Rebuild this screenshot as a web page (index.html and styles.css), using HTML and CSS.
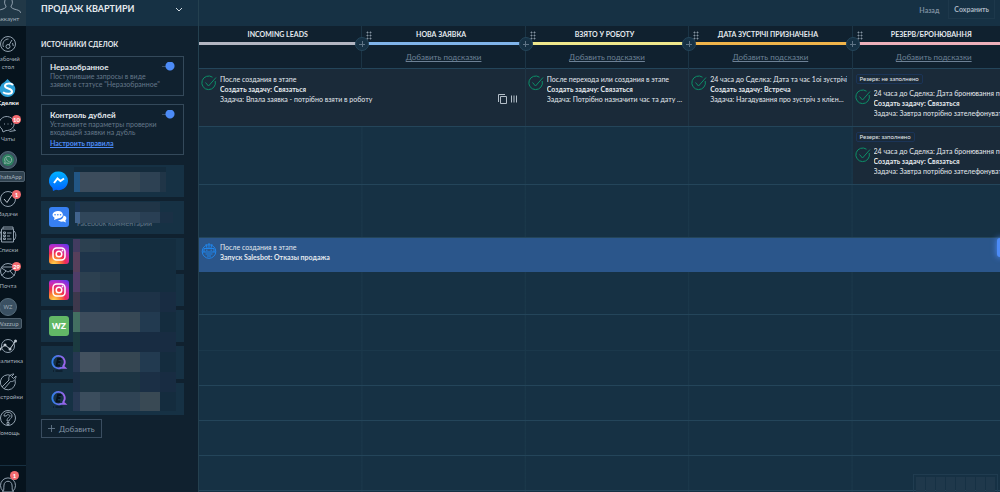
FILE: index.html
```html
<!DOCTYPE html>
<html lang="ru">
<head>
  <meta charset="UTF-8">
  <meta name="viewport" content="width=device-width">
  <title>Продаж квартири</title>
  <link rel="stylesheet" href="styles.css">
</head>

<body>

<nav class="nav">
  <a class="account" href="#account">
    <svg viewBox="0 0 26 13"><path d="M10 0c-1 3 0 5 1 6 0 2-1 2-3 3-3 1-6 1-7 4M17 0c1 3 0 5-1 6 0 2 1 2 3 3 3 1 6 1 7 4" /></svg>
    <span>Аккаунт</span>
  </a>
  <ul class="menu">
    <li><a href="#desk">
      <svg viewBox="0 0 18 18"><circle cx="9" cy="9" r="7.5"/><circle cx="9" cy="11.5" r="2"/><path d="M10 10l3-5M4.500 12a5.500 5.500 0 0 1 5-8M13.500 8l.8 3"/></svg>
      <span>Рабочий<br>стол</span></a></li>
    <li class="active"><a href="#deals">
      <svg viewBox="0 0 18 18"><path class="drop" d="M8.500 0l3 3a7.800 7.800 0 1 1-6 0z"/><path class="dollar" d="M14 6c-2-2-8-2-8 1 0 3 7 2 7 5.500 0 3-6 3-9 .8"/></svg>
      <span>Сделки</span></a></li>
    <li><a href="#chats">
      <svg viewBox="0 0 18 18"><path d="M3 14a7.500 7 0 1 1 4 1.500L4 17zM14.500 14l2 1.500-6 1"/><path d="M5 9h1M8.500 9h1M12 9h1"/></svg>
      <b class="badge">10</b><span>Чаты</span></a></li>
    <li class="pill"><a href="#whatsapp">
      <svg viewBox="0 0 18 18"><circle class="disc" cx="9" cy="9" r="8.500"/><circle class="wa" cx="9" cy="9" r="6"/><path class="phone" d="M5.500 12.500l.6-2a3.500 3.500 0 1 1 1.400 1.400zM7.500 7.500c0 2 1.500 3 3 3"/></svg>
      <span>WhatsApp</span></a></li>
    <li><a href="#tasks">
      <svg viewBox="0 0 18 18"><circle cx="9" cy="9" r="7.500"/><path class="strong" d="M5 9l3 3.500L13 5"/></svg>
      <b class="badge">1</b><span>Задачи</span></a></li>
    <li><a href="#lists">
      <svg viewBox="0 0 18 18"><path d="M4 3V1h10v2M2.500 3h12v13h-12zM2.500 5C0 8 0 12 3 15M15 5c3 3 2 8-1 10M4.500 6h2v1.500h-2zM4.500 9h2v1.500h-2zM4.500 12h2v1.500h-2zM8 7h4.500M8 10h3M8 13h4.500"/></svg>
      <span>Списки</span></a></li>
    <li><a href="#mail">
      <svg viewBox="0 0 18 18"><circle cx="9" cy="9" r="7.500"/><path d="M2.500 6l6.500 4 6.500-4M2.500 14L7 9M15.500 14L11 9M3 5h12"/></svg>
      <b class="badge">29</b><span>Почта</span></a></li>
    <li class="pill"><a href="#wazzup">
      <i class="round">WZ</i>
      <span>Wazzup</span></a></li>
    <li><a href="#analytics">
      <svg viewBox="0 0 18 18"><circle cx="9" cy="9" r="6.500"/><path class="strong" d="M1 12l5-4 5 4 5.500-8"/><path class="nodes" d="M1 12v.01M6 8v.01M11 12v.01M16.500 4v.01"/></svg>
      <span>Аналитика</span></a></li>
    <li><a href="#settings">
      <svg viewBox="0 0 18 18"><path d="M12 2.500A7.500 7.500 0 1 0 16 7M3 14l7-7c-1-3 1-6 5-6l-2.500 2.500 2 2L17 3c0 4-3 6-5.500 5.500L5 16"/></svg>
      <span>Настройки</span></a></li>
    <li><a href="#help">
      <svg viewBox="0 0 18 18"><circle cx="9" cy="9" r="7.500"/><path d="M5 7c0-5 8-5 8 0 0 3-3 2.500-3 5H8c0-4 3-3.500 3-5s-3.500-2-3.500 0zM8 13.500h2v2H8z"/></svg>
      <span>Помощь</span></a></li>
  </ul>
  <a class="bell" href="#notifications">
    <svg viewBox="0 0 18 18"><path d="M4 16A7.500 7.500 0 1 1 14 16M3.500 17c2-1.500 1-4 1.500-7 .5-5 7.500-5 8 0 .5 3-.5 5.500 1.500 7z"/></svg>
    <b class="badge">1</b>
  </a>
</nav>

<aside class="side">
  <header class="side-head">
    <h1>ПРОДАЖ КВАРТИРИ</h1>
    <button class="chevron" aria-label="Воронка"><svg viewBox="0 0 8 5"><path d="M1 1l3 3 3-3"/></svg></button>
  </header>
  <div class="side-body">
    <h2>ИСТОЧНИКИ СДЕЛОК</h2>

    <section class="option">
      <div class="option-head">
        <label for="unsorted">Неразобранное</label>
        <input type="checkbox" id="unsorted" checked>
      </div>
      <p>Поступившие запросы в виде<br>заявок в статусе "Неразобранное"</p>
    </section>
    <section class="option">
      <div class="option-head">
        <label for="doubles">Контроль дублей</label>
        <input type="checkbox" id="doubles" checked>
      </div>
      <p>Установите параметры проверки<br>входящей заявки на дубль</p>
      <a href="#rules">Настроить правила</a>
    </section>

    <div class="sources">
      <svg class="defs">
        <defs>
          <linearGradient id="msg" x2="0" y2="1"><stop stop-color="#00b2ff"/><stop offset="1" stop-color="#0062ff"/></linearGradient>
          <radialGradient id="insta" cx=".25" cy="1" r="1.150"><stop stop-color="#ffd34f"/><stop offset=".25" stop-color="#fb8a32"/><stop offset=".5" stop-color="#f02c55"/><stop offset=".75" stop-color="#c52bc0"/><stop offset="1" stop-color="#6438ea"/></radialGradient>
          <linearGradient id="ring"><stop stop-color="#2f7fe8"/><stop offset="1" stop-color="#a063ea"/></linearGradient>
          <symbol id="ig" viewBox="0 0 20 20"><rect width="20" height="20" rx="3" fill="url(#insta)"/><g fill="none" stroke="#fff" stroke-width="1.500"><rect x="4" y="4" width="12" height="12" rx="3.500"/><circle cx="10" cy="10" r="2.800"/></g><circle cx="13.500" cy="6.500" r=".9" fill="#fff"/></symbol>
          <symbol id="chat" viewBox="0 0 20 20"><path d="M14.200 13.200A6.200 6.200 0 1 0 12 14.800h4z" fill="none" stroke="url(#ring)" stroke-width="1.800"/><path d="M12.500 6H9L7.500 12.500H11M8 9h3.500" fill="none" stroke="#07121c" stroke-width="1.800"/><path d="M4 18h1M6.500 18h7" stroke="#07121c"/></symbol>
        </defs>
      </svg>
      <ul>
        <li><svg viewBox="0 0 20 20"><path d="M10 .5a9.300 9.300 0 1 1-3 18.200L4 20l-.5-3A9.300 9.300 0 0 1 10 .5z" fill="url(#msg)"/><path d="M5 12l3.500-4.500 3 2.500L15 7.500" fill="none" stroke="#fff" stroke-width="2"/></svg></li>
        <li><svg viewBox="0 0 20 20"><rect width="20" height="20" rx="3" fill="#3780f2"/><path d="M14.500 8.500c4 1 3 4 1.800 5l.7 2-2.500-1c-3 .5-5-.5-5.500-1.500 3.500 0 5.500-2 5.500-4.500z" fill="#fff"/><path d="M9 4c6 0 7 7 0 7.500L5 13l.6-2.300C1.500 8.500 4 4 9 4z" fill="#fff"/><path d="M6 7.800h.1M8.800 7.800h.1M11.500 7.800h.1" stroke="#3780f2" stroke-width="1.500" stroke-linecap="round"/></svg><span>Facebook комментарии</span></li>
        <li><svg><use href="#ig"/></svg></li>
        <li><svg><use href="#ig"/></svg></li>
        <li><b class="wz">WZ</b></li>
        <li><svg><use href="#chat"/></svg></li>
        <li><svg><use href="#chat"/></svg></li>
      </ul>
      <!-- hidden account names -->
      <svg class="mosaic" viewBox="0 0 104 246">
        <path fill="#142b3c" d="M1 2h92v5H1zM53 74h50v53H53z"/>
        <path fill="#225684" d="M1 7h6v20H1z"/>
        <path fill="#3c4c5c" d="M7 7h40v20H7zM7 147h40v20H7z"/>
        <path fill="#374855" d="M47 7h20v20H47zM47 147h20v20H47z"/>
        <path fill="#2d4153" d="M67 7h20v20H67z"/>
        <path fill="#203547" d="M87 7h6v20h-6zM7 37h80v10H7z"/>
        <path fill="#1b3553" d="M2 37h5v10H2z"/>
        <path fill="#41638c" d="M2 47h5v11H2z"/>
        <path fill="#30465a" d="M7 47h60v11H7z"/>
        <path fill="#293f54" d="M67 47h20v11H67z"/>
        <path fill="#1a3045" d="M87 47h13v11H87z"/>
        <path fill="#423b60" d="M0 74h7v13H0z"/>
        <path fill="#573f5b" d="M0 87h7v20H0z"/>
        <path fill="#503d68" d="M0 107h7v20H0z"/>
        <path fill="#3d384c" d="M0 127h7v20H0z"/>
        <path fill="#426f61" d="M0 147h7v20H0z"/>
        <path fill="#1b3b40" d="M0 167h7v20H0z"/>
        <path fill="#2c4050" d="M7 74h20v13H7zM7 107h20v20H7z"/>
        <path fill="#273c4c" d="M27 74h20v13H27zM27 107h20v20H27z"/>
        <path fill="#1e344a" d="M7 87h40v20H7zM7 127h20v20H7z"/>
        <path fill="#142d3f" d="M47 74h56v53H47z"/>
        <path fill="#1d3247" d="M27 127h60v20H27z"/>
        <path fill="#182c42" d="M87 127h16v20H87zM7 167h96v20H7zM87 207h16v20H87z"/>
        <path fill="#223a50" d="M67 147h20v20H67zM67 187h20v20H67z"/>
        <path fill="#142c3e" d="M87 147h16v20H87zM87 187h16v20H87zM87 227h16v19H87z"/>
        <path fill="#273852" d="M0 187h7v20H0zM0 227h7v19H0z"/>
        <path fill="#43515f" d="M7 187h20v20H7z"/>
        <path fill="#354652" d="M27 187h40v20H27z"/>
        <path fill="#1b2f45" d="M0 207h7v20H0zM67 207h20v20H67z"/>
        <path fill="#1d3443" d="M7 207h60v20H7z"/>
        <path fill="#3b4d5d" d="M7 227h20v19H7z"/>
        <path fill="#2f4354" d="M27 227h40v19H27z"/>
        <path fill="#394954" d="M67 227h20v19H67z"/>
      </svg>
    </div>
    <button class="add"><svg viewBox="0 0 8 8"><path d="M4 0v8M0 4h8"/></svg>Добавить</button>
  </div>
</aside>

<main class="main">
  <header class="top">
    <button class="back">Назад</button>
    <button class="save">Сохранить</button>
  </header>

  <div class="board">
    <svg class="defs">
      <symbol id="task" viewBox="0 0 16 16"><path d="M14.200 6a6.800 6.800 0 1 1-2.700-3.800M4.500 7.500L7.500 11 15 2.500"/></symbol>
    </svg>
    <div class="stages">
      <section class="stage grey"><h3>INCOMING LEADS</h3><button aria-label="Добавить этап"></button></section>
      <section class="stage blue"><h3>НОВА ЗАЯВКА</h3><button aria-label="Добавить этап"></button><a href="#hint">Добавить подсказки</a></section>
      <section class="stage yellow"><h3>ВЗЯТО У РОБОТУ</h3><button aria-label="Добавить этап"></button><a href="#hint">Добавить подсказки</a></section>
      <section class="stage orange"><h3>ДАТА ЗУСТРІЧІ ПРИЗНАЧЕНА</h3><button aria-label="Добавить этап"></button><a href="#hint">Добавить подсказки</a></section>
      <section class="stage pink"><h3>РЕЗЕРВ/БРОНЮВАННЯ</h3><a href="#hint">Добавить подсказки</a></section>
    </div>

    <div class="rows">
      <div class="row tall">
        <article class="card wide">
          <svg class="check"><use href="#task"/></svg>
          <p>После создания в этапе<br><b>Создать задачу: Связаться</b><br>Задача: Впала заявка - потрібно взяти в роботу</p>
          <div class="tools">
            <button aria-label="Копировать"><svg viewBox="0 0 9 10"><path d="M2.500 2.500h6v7h-6zM.5 8V.5H7"/></svg></button>
            <button aria-label="Ширина"><svg viewBox="0 0 9 10"><path d="M1.500 1.500v7M4 1.500v7M6.500 1.500v7"/></svg></button>
          </div>
        </article>
        <article class="card">
          <svg class="check"><use href="#task"/></svg>
          <p>После перехода или создания в этапе<br><b>Создать задачу: Связаться</b><br>Задача: Потрібно назначити час та дату ...</p>
        </article>
        <article class="card">
          <svg class="check"><use href="#task"/></svg>
          <p>24 часа до Сделка: Дата та час 1оі зустрічі<br><b>Создать задачу: Встреча</b><br>Задача: Нагадування про зустріч з клієн...</p>
        </article>
        <article class="card tagged">
          <span class="tag">Резерв: не заполнено</span>
          <svg class="check"><use href="#task"/></svg>
          <p>24 часа до Сделка: Дата бронювання по<br><b>Создать задачу: Связаться</b><br>Задача: Завтра потрібно зателефонувати</p>
        </article>
      </div>
      <div class="row tall">
        <article class="card tagged last">
          <span class="tag">Резерв: заполнено</span>
          <svg class="check"><use href="#task"/></svg>
          <p>24 часа до Сделка: Дата бронювання по<br><b>Создать задачу: Связаться</b><br>Задача: Завтра потрібно зателефонувати</p>
        </article>
      </div>
      <div class="row middle"></div>
      <div class="row bot">
        <article class="card">
          <svg class="check" viewBox="0 0 16 16"><circle cx="8" cy="8.500" r="6.800"/><path d="M3 5.500h10v3.500H3zM5 7.200h1.500M9.500 7.200H11M4.500 11h7M6 13h4M8 0v5M5 1l1 4M11 1l-1 4M1 9h2M13 9h2"/></svg>
          <p>После создания в этапе<br><b>Запуск Salesbot: Отказы продажа</b></p>
        </article>
        <button class="handle" aria-label="Растянуть"></button>
      </div>
      <div class="row high"></div>
      <div class="row faint"></div>
      <div class="row"></div>
      <div class="row"></div>
      <div class="row"></div>
      <div class="row"></div>
    </div>
  </div>

  <div class="minimap"><i></i><i></i><i></i><i></i><i></i><i></i><i></i><i></i></div>
</main>

</body>
</html>
```
FILE: styles.css
```css
* { box-sizing: border-box; }
body, h1, h2, h3, p, ul { margin: 0; padding: 0; }
body {
  display: flex;
  height: 100vh;
  overflow: hidden;
  background: #163144;
  color: #e4e9ee;
  font: 7px/10px Lato, "Noto Sans", sans-serif;
}
button {
  padding: 0;
  border: 0;
  background: none;
  color: inherit;
  font: inherit;
  cursor: pointer;
}
a { color: inherit; }
ul { list-style: none; }
svg { fill: none; stroke-width: 1; }
.defs { position: absolute; width: 0; height: 0; }

/* left menu, partly scrolled out */
.nav {
  display: flex;
  flex: none;
  flex-direction: column;
  width: 36px;
  margin-left: -10px;
  background: #06131d;
  color: #a3b0bc;
  font-size: 6px;
  line-height: 8px;
}
.nav a {
  display: flex;
  position: relative;
  flex-direction: column;
  align-items: center;
  text-align: center;
  text-decoration: none;
  white-space: nowrap;
}
.nav svg { flex: none; width: 18px; height: 18px; margin-bottom: 2px; stroke: #91a0ae; }
.nav .account { height: 26px; background: #213847; }
.nav .account svg { width: 26px; height: 13px; }
.menu { padding-top: 9px; }
.menu li { padding-bottom: 8px; }
.menu .active { color: #fff; font-weight: bold; }
.nav .drop { fill: #2c9fd6; stroke: none; }
.nav .dollar { stroke: #fff; stroke-width: 2; }
.nav .strong { stroke: #c0c9d2; }
.nav .nodes { stroke: #c0c9d2; stroke-width: 3; stroke-linecap: round; }
.nav .disc { fill: #3a4e5d; stroke: #566c7b; }
.nav .wa { fill: #2c7f5f; stroke: none; }
.nav .phone { stroke: #8eb2a7; }
.round {
  width: 18px;
  height: 18px;
  margin-bottom: 2px;
  border: 1px solid #566c7b;
  border-radius: 50%;
  background: #3a5062;
  font: 6px/16px "Open Sans", sans-serif;
}
.pill span {
  padding: 1px 2px;
  border: 1px solid #50616f;
  border-radius: 2px;
  background: #2f4250;
  line-height: 7px;
}
.badge {
  position: absolute;
  top: 0;
  right: 5px;
  min-width: 9px;
  height: 9px;
  border-radius: 5px;
  background: #f36b70;
  color: #fff;
  line-height: 9px;
}
.nav .bell { margin-top: auto; height: 27px; padding-top: 9px; border-top: 1px solid #173041; }
.bell .badge { top: 5px; right: 7px; }

/* deal sources */
.side {
  flex: none;
  width: 172px;
  background: #10212f;
}
.side-head {
  display: flex;
  align-items: center;
  justify-content: space-between;
  height: 26px;
  padding: 0 15px 8px;
  background: #163144;
}
h1 { font-size: 9px; line-height: 18px; white-space: nowrap; }
.chevron svg { display: block; width: 8px; height: 5px; stroke: #d3dce3; }
.side-body { padding: 12px 14px 12px 15px; }
h2 { margin-bottom: 6px; font-size: 7px; line-height: 12px; white-space: nowrap; }
.option {
  margin-bottom: 8px;
  padding: 4px 8px 7px;
  border: 1px solid #34495a;
  color: #65788a;
  line-height: 8px;
  white-space: nowrap;
}
.option-head {
  display: flex;
  align-items: center;
  justify-content: space-between;
  height: 11px;
}
.option label { color: #e4e9ee; font-size: 8px; font-weight: bold; }
.option input {
  appearance: none;
  width: 13px;
  height: 9px;
  margin: 0;
  background:
    radial-gradient(circle at 8px 4px, #4c8bf7 4px, transparent 5px),
    linear-gradient(#3a5064, #3a5064) 0 4px / 6px 1px no-repeat;
}
.option a {
  display: block;
  margin-top: 3px;
  color: #4c8bf7;
  font-weight: bold;
}
.sources { position: relative; margin-top: 10px; }
.sources ul {
  display: grid;
  grid-auto-rows: 1fr;
  gap: 4px;
  height: 250px;
}
.sources li {
  display: flex;
  align-items: center;
  gap: 8px;
  padding: 0 8px;
  background: #163144;
}
.sources li svg, .wz { width: 20px; height: 20px; }
.sources span { align-self: end; line-height: 22px; color: #65788a; }
.wz {
  border-radius: 3px;
  background: #62b866;
  color: #fff;
  font: bold 9px/20px "Open Sans", sans-serif;
  text-align: center;
}
.mosaic {
  position: absolute;
  top: 0;
  left: 32px;
  width: 104px;
  height: 246px;
  shape-rendering: crispEdges;
}
.add {
  display: flex;
  align-items: center;
  gap: 4px;
  height: 19px;
  margin-top: 4px;
  padding: 0 6px;
  border: 1px solid #3a4d60;
  color: #8192a3;
  font-size: 8px;
}
.add svg { width: 7px; height: 7px; stroke: #65788a; }

/* funnel */
.main {
  display: flex;
  flex-direction: column;
  flex: 1;
  position: relative;
  min-width: 0;
  overflow: hidden;
  border-left: 1px solid #24404f;
}
.top {
  display: flex;
  justify-content: flex-end;
  height: 26px;
  padding: 0 5px 7px 0;
  font-weight: bold;
}
.back { padding: 0 9px; color: #7d8fa0; }
.save { padding: 0 5px; border: 1px solid #1d384b; border-top: 0; color: #a9b6c2; }
.board { display: flex; flex: 1; flex-direction: column; }
.stages, .row {
  display: grid;
  grid-template-columns: repeat(5, 20.4%);
}
.stages { height: 43px; background: #10212f; border-bottom: 1px solid #24455a; }
.stage {
  position: relative;
  border-right: 1px solid #1b3445;
  text-align: center;
  white-space: nowrap;
}
.stage h3 {
  height: 19px;
  padding-right: 5px;
  border-bottom: 3px solid;
  font-size: 7px;
  line-height: 17px;
}
.stage + .stage::before {
  content: "";
  position: absolute;
  top: 5px;
  left: 4px;
  width: 6px;
  height: 9px;
  background: radial-gradient(circle, #8493a0 30%, transparent 60%) 0 0 / 3px 3px;
}
.grey h3 { border-color: #b3b6c2; }
.blue h3 { border-color: #80b4ea; }
.yellow h3 { border-color: #efe78c; }
.orange h3 { border-color: #f0b44a; }
.pink h3 { border-color: #edb0ba; }
.stage button {
  position: absolute;
  z-index: 1;
  top: 11px;
  right: -8px;
  width: 14px;
  height: 14px;
  border: 1px solid #24455a;
  border-radius: 50%;
  background:
    linear-gradient(#5f7486, #5f7486) center / 6px 1px no-repeat,
    linear-gradient(#5f7486, #5f7486) center / 1px 6px no-repeat,
    #163144;
}
.stage a {
  display: block;
  color: #6d8196;
  font-size: 8px;
  line-height: 24px;
}
.rows {
  display: flex;
  flex: 1;
  flex-direction: column;
  background: linear-gradient(to left, #20405280 1px, transparent 1px) 0 0 / 20.4% 100%;
}
.row { min-height: 35px; border-bottom: 1px solid #24455a; }
.row.tall { min-height: 58px; }
.row.middle { min-height: 53px; }
.row.high { min-height: 43px; }
.row.faint { min-height: 36px; border-color: #1b384b; }
.card {
  display: grid;
  grid-template-columns: 16px 1fr auto;
  align-content: start;
  column-gap: 3px;
  padding: 5px 2px;
  border-right: 1px solid #24405280;
  background: #1a2a39;
  white-space: nowrap;
}
.card.wide { grid-column: span 2; }
.card.last { grid-column: 5; }
.check { width: 16px; height: 16px; stroke: #0c8f68; }
.card .check { margin-top: 1px; }
.card p { min-width: 0; overflow: hidden; }
.tools { display: flex; align-self: end; gap: 3px; padding-right: 4px; }
.tools svg { display: block; width: 9px; height: 10px; stroke: #b3bec8; }
.card.tagged { row-gap: 4px; padding-bottom: 2px; }
.tag {
  grid-column: 1 / -1;
  justify-self: start;
  margin-left: 1px;
  padding: 0 3px;
  border: 1px solid #1b3457;
  border-radius: 2px;
  font-size: 6px;
  line-height: 8px;
}
.row.bot {
  position: relative;
  min-height: 34px;
  border: 0;
  background: #2b568b;
}
.bot .card { padding-top: 4px; border: 0; background: none; }
.bot .check { stroke: #2184e8; }
.handle {
  position: absolute;
  top: 0;
  right: -6px;
  width: 9px;
  height: 19px;
  border-radius: 3px;
  background: #4c8bf7;
  box-shadow: 0 0 6px #4c8bf7;
}
.minimap {
  display: flex;
  position: absolute;
  right: 2px;
  bottom: -6px;
  gap: 1px;
  height: 24px;
  padding: 2px;
  border: 1px solid #203c50;
}
.minimap i { width: 9px; background: #1f384b; }
```
